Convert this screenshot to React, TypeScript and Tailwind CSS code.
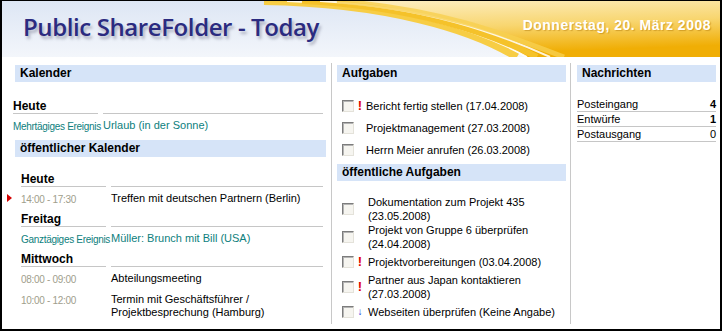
import React from "react";

const sans = "font-['Liberation_Sans',Arial,sans-serif]";

function HeaderArt() {
  return (
    <svg
      className="absolute inset-0 h-full w-full"
      viewBox="0 0 718 56"
      preserveAspectRatio="none"
    >
      <defs>
        <linearGradient id="sky" x1="0" y1="0" x2="0" y2="1">
          <stop offset="0" stopColor="#dde6f4" />
          <stop offset="1" stopColor="#f3f6fb" />
        </linearGradient>
        <linearGradient id="sun" x1="0" y1="0" x2="0.3" y2="1">
          <stop offset="0" stopColor="#fdf1cc" />
          <stop offset="0.55" stopColor="#f8d670" />
          <stop offset="1" stopColor="#f0ae05" />
        </linearGradient>
      </defs>
      <rect width="718" height="56" fill="url(#sky)" />
      <path d="M255 0 C380 0 470 25 525 56 L718 56 L718 0 Z" fill="url(#sun)" />
      <path d="M262 0 C385 2 470 28 515 56" stroke="#f7cd45" strokeWidth="8" fill="none" />
      <path d="M285 0 C400 4 480 30 525 56" stroke="#ffffff" strokeWidth="2" fill="none" opacity="0.9" />
      <path d="M300 0 C410 5 488 32 535 56" stroke="#f5c22a" strokeWidth="6" fill="none" />
      <path d="M318 0 C425 6 495 32 548 56" stroke="#ffffff" strokeWidth="2" fill="none" opacity="0.85" />
      <path d="M335 0 C440 8 505 34 562 56" stroke="#f7cf4f" strokeWidth="5" fill="none" opacity="0.8" />
    </svg>
  );
}

function SectionHeader({ title }: { title: string }) {
  return (
    <div className="h-[17px] bg-[#d6e4f8] pl-[5px] text-[12px] font-bold leading-[17px] text-black">
      {title}
    </div>
  );
}

function DayHeading({ label }: { label: string }) {
  return (
    <div className="mb-[2px] flex gap-[5px] pr-[3px] pt-[3px]">
      <div className="w-[85px] border-b border-[#c6c6c6] text-[12px] font-bold leading-[13px] text-black">
        {label}
      </div>
      <div className="flex-1 border-b border-[#c6c6c6]" />
    </div>
  );
}

function EventRow({
  when,
  title,
  allDay,
  current,
}: {
  when: string;
  title: string;
  allDay?: boolean;
  current?: boolean;
}) {
  return (
    <div className="relative flex items-start gap-[5px] pb-[4px] pt-[3px]">
      {current ? (
        <span className="absolute left-[-14px] top-[5px] h-0 w-0 border-y-[4px] border-l-[5px] border-y-transparent border-l-[#d40000]" />
      ) : null}
      <div
        className={`w-[85px] shrink-0 whitespace-nowrap pt-[1px] text-[10px] leading-[13px] tracking-[-0.3px] ${
          allDay ? "text-[#0d807d]" : "text-[#a09e8c]"
        }`}
      >
        {when}
      </div>
      <div
        className={`flex-1 text-[11px] leading-[13px] ${allDay ? "text-[#0d807d]" : "text-black"}`}
      >
        {title}
      </div>
    </div>
  );
}

function Checkbox() {
  return (
    <div className="h-[12px] w-[12px] shrink-0 border border-b-[#e4e2da] border-l-[#7c7c7c] border-r-[#e4e2da] border-t-[#7c7c7c] bg-[#f6f5f0] shadow-[inset_1px_1px_0_#b4b4b4]" />
  );
}

function TaskRow({
  text,
  mark,
  shift,
}: {
  text: string;
  mark?: "high" | "low";
  shift?: boolean;
}) {
  return (
    <div className="flex min-h-[22px] items-center">
      <Checkbox />
      <div className="flex w-[12px] shrink-0 justify-center">
        {mark === "high" ? (
          <span className="text-[13px] font-bold leading-[14px] text-[#e00000]">!</span>
        ) : mark === "low" ? (
          <span className="text-[10px] font-bold leading-[14px] text-[#1030e0]">↓</span>
        ) : null}
      </div>
      <div className={`text-[11px] leading-[14px] text-black ${shift ? "pl-[2px]" : ""}`}>
        {text}
      </div>
    </div>
  );
}

function MailRow({ label, count, bold }: { label: string; count: number; bold?: boolean }) {
  return (
    <div className="flex h-[15px] items-center justify-between border-b border-[#c6c6c6] text-[11px] leading-[14px] text-black">
      <span>{label}</span>
      <span className={bold ? "font-bold" : ""}>{count}</span>
    </div>
  );
}

export default function App() {
  return (
    <div
      className={`flex h-[331px] w-[722px] flex-col border-b-2 border-l-2 border-r-2 border-t border-black bg-white ${sans}`}
    >
      <div className="relative flex h-[56px] shrink-0 items-start justify-between">
        <HeaderArt />
        <div className="relative pl-[21px] pt-[11px] font-['Open_Sans',sans-serif] text-[24px] font-semibold leading-[30px] tracking-[-0.4px] text-[#2b2b80] [text-shadow:2px_3px_3px_rgba(60,60,90,0.35)]">
          Public ShareFolder - Today
        </div>
        <div className="relative pr-[9px] pt-[15px] text-[14px] font-bold leading-[18px] tracking-[0.5px] text-white [text-shadow:1px_1px_1px_rgba(170,110,0,0.45)]">
          Donnerstag, 20. März 2008
        </div>
      </div>

      <div className="flex flex-1">
        {/* Kalender */}
        <div className="w-[329px] shrink-0 pl-[11px] pr-[5px] pt-[8px]">
          <div className="ml-[2px]">
            <SectionHeader title="Kalender" />
          </div>
          <div className="mt-[15px]">
            <DayHeading label="Heute" />
            <EventRow when="Mehrtägiges Ereignis" title="Urlaub (in der Sonne)" allDay />
          </div>
          <div className="ml-[2px] mt-[3px]">
            <SectionHeader title="öffentlicher Kalender" />
          </div>
          <div className="mt-[13px] pl-[8px]">
            <DayHeading label="Heute" />
            <EventRow when="14:00 - 17:30" title="Treffen mit deutschen Partnern (Berlin)" current />
            <DayHeading label="Freitag" />
            <EventRow when="Ganztägiges Ereignis" title="Müller: Brunch mit Bill (USA)" allDay />
            <DayHeading label="Mittwoch" />
            <EventRow when="08:00 - 09:00" title="Abteilungsmeeting" />
            <EventRow when="10:00 - 12:00" title="Termin mit Geschäftsführer / Projektbesprechung (Hamburg)" />
          </div>
        </div>

        <div className="mb-[5px] mt-[6px] w-px shrink-0 bg-[#c8c8c8]" />

        {/* Aufgaben */}
        <div className="w-[238px] shrink-0 pl-[5px] pr-[4px] pt-[8px]">
          <SectionHeader title="Aufgaben" />
          <div className="mt-[13px] pl-[5px]">
            <TaskRow text="Bericht fertig stellen (17.04.2008)" mark="high" />
            <TaskRow text="Projektmanagement (27.03.2008)" />
            <TaskRow text="Herrn Meier anrufen (26.03.2008)" />
          </div>
          <div className="mt-[3px]">
            <SectionHeader title="öffentliche Aufgaben" />
          </div>
          <div className="mt-[14px] pl-[5px]">
            <TaskRow text="Dokumentation zum Projekt 435 (23.05.2008)" shift />
            <TaskRow text="Projekt von Gruppe 6 überprüfen (24.04.2008)" shift />
            <TaskRow text="Projektvorbereitungen (03.04.2008)" mark="high" shift />
            <TaskRow text="Partner aus Japan kontaktieren (27.03.2008)" mark="high" shift />
            <TaskRow text="Webseiten überprüfen (Keine Angabe)" mark="low" shift />
          </div>
        </div>

        <div className="mb-[5px] mt-[6px] w-px shrink-0 bg-[#c8c8c8]" />

        {/* Nachrichten */}
        <div className="flex-1 pl-[6px] pr-[4px] pt-[8px]">
          <SectionHeader title="Nachrichten" />
          <div className="mt-[15px]">
            <MailRow label="Posteingang" count={4} bold />
            <MailRow label="Entwürfe" count={1} bold />
            <MailRow label="Postausgang" count={0} />
          </div>
        </div>
      </div>
    </div>
  );
}
